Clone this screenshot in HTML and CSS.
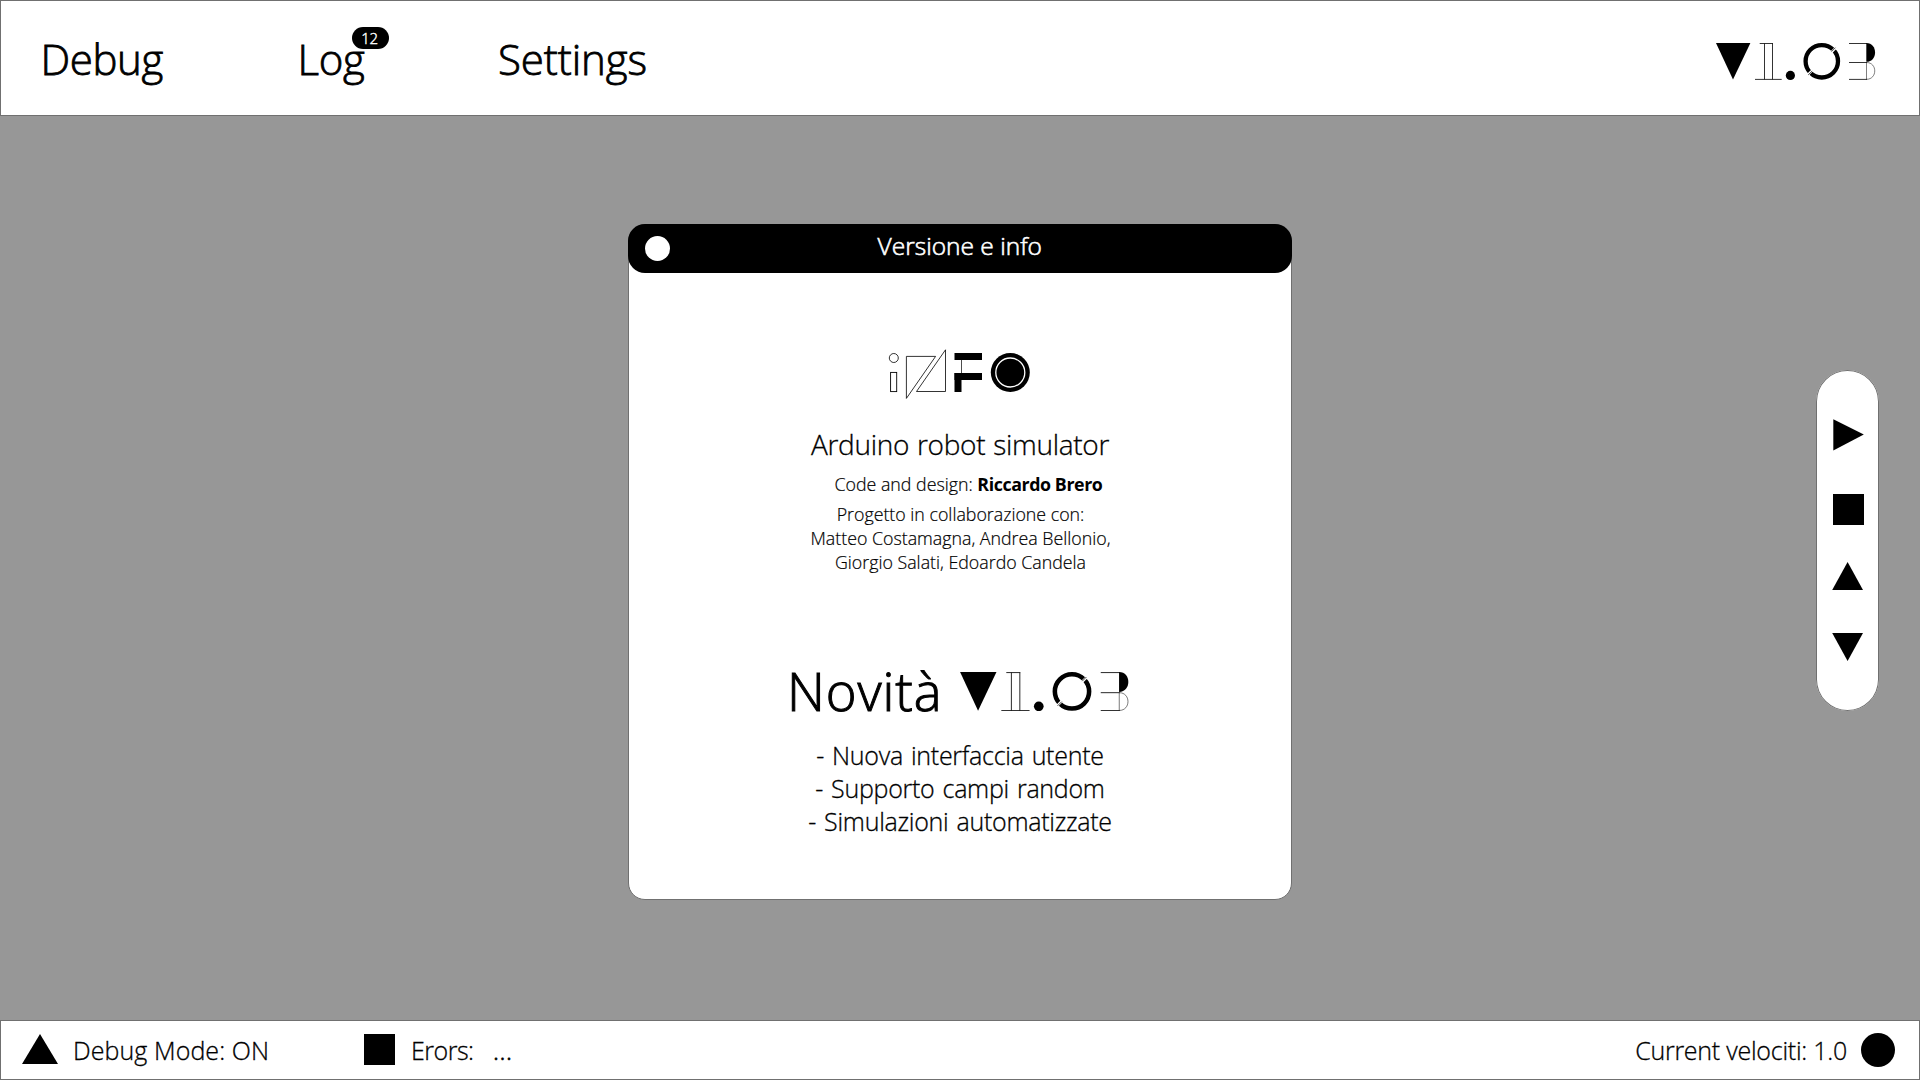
FILE: index.html
```
<!DOCTYPE html>
<html lang="it">
<head>
<meta charset="utf-8">
<title>Arduino robot simulator</title>
<link rel="stylesheet" href="styles.css">
</head>
<body>
<svg class="defs" aria-hidden="true">
  <symbol id="version-logo" viewBox="0 0 160 38">
    <polygon points="0,1 34.4,1 17,37.5"/>
    <g fill="none" stroke="#000" stroke-width=".8">
      <line x1="43.7" y1="1.5" x2="57" y2="1.5"/>
      <line x1="48.5" y1="1.5" x2="48.5" y2="37.4"/>
      <line x1="56.5" y1="1.5" x2="56.5" y2="37.4"/>
      <line x1="39" y1="37.4" x2="65.7" y2="37.4"/>
      <line x1="133" y1="1.5" x2="151" y2="1.5"/>
      <line x1="133" y1="20.5" x2="151" y2="20.5"/>
      <line x1="133" y1="37.4" x2="151" y2="37.4"/>
    </g>
    <circle cx="74.4" cy="33.4" r="4.6"/>
    <circle cx="105.8" cy="19.3" r="16.2" fill="none" stroke="#000" stroke-width="4.3"/>
    <g stroke="#fff" stroke-width="2.4">
      <line x1="115" y1="10.6" x2="120.6" y2="5"/>
      <line x1="91" y1="33.6" x2="96.6" y2="28"/>
    </g>
    <g stroke="#000" stroke-width=".7">
      <line x1="115.5" y1="9.6" x2="119.4" y2="5.7"/>
      <line x1="92.2" y1="32.9" x2="96.1" y2="29"/>
    </g>
    <path d="M150.3 1C162 1 162 19.8 150.3 19.8Z"/>
    <path d="M150.5 20.5C161.5 20.5 161.5 37.3 150.5 37.3Z" fill="none" stroke="#000" stroke-width=".5"/>
  </symbol>
</svg>

<header class="topbar">
  <nav class="menu">
    <span class="menu-item debug">Debug</span>
    <span class="menu-item log">Log<span class="badge">12</span></span>
    <span class="menu-item settings">Settings</span>
  </nav>
  <svg class="version"><use href="#version-logo"/></svg>
</header>

<main class="stage">
  <section class="dialog">
    <header class="dialog-bar">
      <span class="close"></span>
      <h1 class="dialog-title">Versione e info</h1>
    </header>
    <svg class="info-logo" viewBox="0 0 150 55" fill="none" stroke="#000">
      <circle cx="8.8" cy="13" r="4.5" stroke-width=".8"/>
      <rect x="5.6" y="27.4" width="6.1" height="19.2" stroke-width=".9"/>
      <polygon points="21.4,11.4 50.6,11.4 21.4,53.4" stroke-width=".8"/>
      <polygon points="60.5,4.8 60.5,46.5 31.5,46.5" stroke-width=".8"/>
      <g fill="#000" stroke="none">
        <rect x="69.5" y="8" width="27.5" height="7"/>
        <rect x="69.5" y="28" width="27.5" height="7"/>
        <rect x="69.5" y="28" width="7" height="19"/>
        <circle cx="125.3" cy="27.5" r="19.5"/>
      </g>
      <line x1="76.5" y1="15" x2="76.5" y2="28" stroke-width=".7"/>
      <circle cx="125.3" cy="27.5" r="14.5" stroke="#fff" stroke-width="1.3"/>
    </svg>
    <h2 class="product">Arduino robot simulator</h2>
    <p class="author">Code and design: <strong>Riccardo Brero</strong></p>
    <p class="credits">Progetto in collaborazione con:<br>Matteo Costamagna, Andrea Bellonio,<br>Giorgio Salati, Edoardo Candela</p>
    <div class="news">
      <h2 class="news-title">Novità</h2>
      <svg class="news-version"><use href="#version-logo"/></svg>
    </div>
    <ul class="news-list">
      <li>- Nuova interfaccia utente</li>
      <li>- Supporto campi random</li>
      <li>- Simulazioni automatizzate</li>
    </ul>
  </section>

  <aside class="controls">
    <svg viewBox="0 0 62 340">
      <polygon points="16.3,49.3 46.8,64.5 16.3,80.5"/>
      <rect x="16" y="124" width="31" height="31"/>
      <polygon points="30.6,192 46,220 15.2,220"/>
      <polygon points="15.2,263 46,263 30.6,291"/>
    </svg>
  </aside>
</main>

<footer class="statusbar">
  <svg class="mark triangle" viewBox="0 0 36 30"><polygon points="18,0 36,30 0,30"/></svg>
  <span class="mode">Debug Mode: ON</span>
  <span class="mark square"></span>
  <span class="errors">Erors:</span>
  <span class="dots">...</span>
  <span class="velocity">Current velociti: 1.0</span>
  <span class="mark dot"></span>
</footer>
</body>
</html>
```
FILE: styles.css
```
* { box-sizing: border-box; margin: 0; padding: 0; }

body {
  width: 1920px;
  height: 1080px;
  overflow: hidden;
  display: flex;
  flex-direction: column;
  background: #979797;
  color: #000;
  font-family: "Open Sans", "Noto Sans", sans-serif;
  font-weight: 300;
  -webkit-text-stroke: .2px currentColor;
}

h1, h2 { font-weight: 300; }
svg { display: block; flex: none; }
.defs { width: 0; height: 0; position: absolute; }

.topbar {
  height: 116px;
  flex: none;
  display: flex;
  justify-content: space-between;
  align-items: center;
  padding: 1px 43px 0 39.5px;
  background: #fff;
  border: 1px solid #707070;
}
.menu {
  display: grid;
  grid-template-columns: 257px 200.5px auto;
  font-size: 42px;
  line-height: 58px;
  -webkit-text-stroke-width: .8px;
}
.menu-item { position: relative; justify-self: start; }
.debug { letter-spacing: -.4px; }
.log { letter-spacing: -.3px; }
.settings { letter-spacing: -.1px; }
.badge {
  position: absolute;
  left: 54.5px;
  top: -3px;
  width: 37px;
  height: 22px;
  border-radius: 11px;
  background: #000;
  color: #fff;
  font-size: 15px;
  line-height: 23px;
  letter-spacing: -.3px;
  padding-right: 2px;
  text-align: center;
  -webkit-text-stroke-width: .4px;
}
.version { width: 160px; height: 38px; margin-top: 5px; }

.stage {
  flex: 1;
  display: grid;
  grid-template-columns: 1fr 664px 1fr;
  align-items: start;
}
.dialog {
  grid-column: 2;
  height: 676px;
  margin-top: 108px;
  display: flex;
  flex-direction: column;
  background: #fff;
  border: 1px solid #707070;
  border-radius: 17px;
  text-align: center;
}
.dialog-bar {
  height: 49px;
  margin: -1px -1px 0 -1.5px;
  display: grid;
  grid-template-columns: 60px 1fr 60px;
  background: #000;
  color: #fff;
  border-radius: 17px;
}
.close {
  width: 25px;
  height: 25px;
  margin: 12px 0 0 17.5px;
  border-radius: 50%;
  background: #fff;
}
.dialog-title {
  font-size: 24.5px;
  line-height: 43px;
  -webkit-text-stroke-width: .6px;
}
.info-logo { width: 150px; height: 55px; margin: 72px 0 0 256px; }
.product {
  margin-top: 25px;
  font-size: 28px;
  line-height: 38px;
  letter-spacing: -.3px;
  word-spacing: 1px;
  -webkit-text-stroke-width: .3px;
}
.author, .credits { font-size: 17.8px; line-height: 24px; letter-spacing: 0; }
.author { margin-top: 9px; padding-left: 17px; }
.author strong { font-weight: 700; letter-spacing: -.4px; -webkit-text-stroke-width: 0; }
.credits { margin-top: 6px; padding-left: 1px; }
.news {
  display: flex;
  margin-top: 81px;
  padding-left: 158px;
}
.news-title {
  width: 172.5px;
  text-align: left;
  font-size: 52.5px;
  line-height: 72px;
  letter-spacing: .9px;
  -webkit-text-stroke-width: 1px;
}
.news-version { width: 169.4px; height: 40.2px; margin-top: 16px; }
.news-list {
  margin-top: 12px;
  list-style: none;
  font-size: 25px;
  line-height: 33px;
  letter-spacing: -.27px;
  word-spacing: 1.8px;
  -webkit-text-stroke-width: .3px;
}

.controls {
  justify-self: end;
  width: 63px;
  height: 341px;
  margin: 254px 41px 0 0;
  padding-left: 1px;
  background: #fff;
  border-radius: 31.5px;
  box-shadow: inset 0 0 0 1px #707070;
}
.controls svg { width: 62px; height: 340px; }

.statusbar {
  height: 60px;
  flex: none;
  display: flex;
  align-items: center;
  padding: 0 24px 0 21px;
  background: #fff;
  border: 1px solid #707070;
  font-size: 25px;
  line-height: 34px;
  -webkit-text-stroke-width: .3px;
}
.mark { flex: none; background: #000; }
.triangle { width: 36px; height: 30px; margin: -2px 0 0; background: none; }
.square { width: 31px; height: 31px; margin-top: -2px; }
.dot { width: 34px; height: 34px; border-radius: 50%; margin-left: 14px; }
.mode { width: 306px; padding-left: 15px; letter-spacing: .08px; }
.errors { width: 98px; padding-left: 16px; margin-top: -1px; letter-spacing: -.5px; }
.dots { letter-spacing: .5px; -webkit-text-stroke-width: .6px; }
.velocity { margin-left: auto; letter-spacing: -.25px; }
```
